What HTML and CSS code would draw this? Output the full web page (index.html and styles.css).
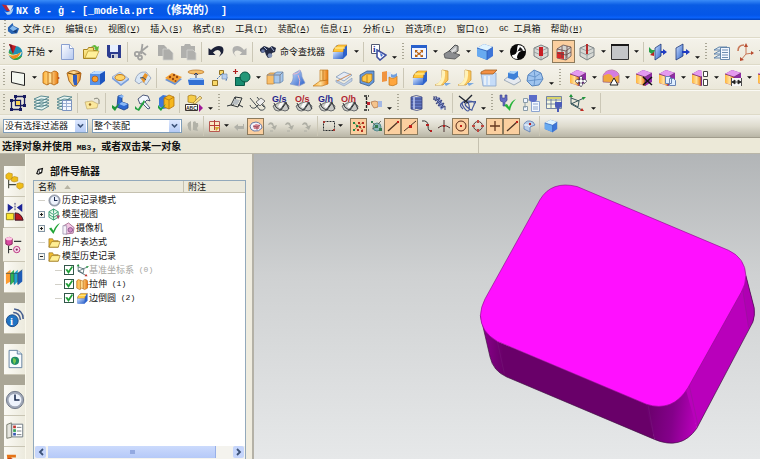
FILE: index.html
```html
<!DOCTYPE html>
<html lang="zh-CN">
<head>
<meta charset="utf-8">
<title>NX 8</title>
<link rel="stylesheet" href="styles.css">
</head>
<body>
<svg class="sprite" width="0" height="0" aria-hidden="true">
<defs>
<linearGradient id="gB" x2="1" y2="1"><stop offset="0" stop-color="#cfe2ff"/><stop offset="1" stop-color="#2a5fc8"/></linearGradient>
<linearGradient id="gO" x2="1" y2="0"><stop offset="0" stop-color="#ffb43c"/><stop offset=".5" stop-color="#ffe09a"/><stop offset="1" stop-color="#e8780c"/></linearGradient>
<linearGradient id="gY" x2="1" y2="1"><stop offset="0" stop-color="#fff6a8"/><stop offset="1" stop-color="#e8b020"/></linearGradient>
<linearGradient id="gP" x2="1" y2="1"><stop offset="0" stop-color="#fff"/><stop offset="1" stop-color="#b4c8f0"/></linearGradient>
<symbol id="start" viewBox="0 0 18 18"><circle cx="9.500" cy="10" r="7" fill="#1f8fb4"/><path d="M3 7q6 8 13 6q-2 4-7 4q-6-1-6-10z" fill="#38a838"/><path d="M1 8q4 7 15 1q-2 6-8 6q-6-1-7-7z" fill="#f4f4d0"/><path d="M2 11q5 4 13-2q-3 7-8 7z" fill="#f08a1c"/><path d="M3 1l7 2-3 8z" fill="#c41c24"/><path d="M3 1l3 1 1 9z" fill="#7c1420"/></symbol>
<symbol id="new" viewBox="0 0 18 18"><path d="M2.500 1.500h8l4 4v11h-12z" fill="url(#gP)" stroke="#8aa0d0"/><path d="M10.500 1.500v4h4" fill="#fff" stroke="#8aa0d0"/></symbol>
<symbol id="open" viewBox="0 0 18 18"><path d="M1.500 15.500v-9h4l1-2h5v3h4l-2 8z" fill="url(#gY)" stroke="#a88420"/><path d="M3 15l3-7h11l-3 7z" fill="#fff09a" stroke="#b89830" stroke-width=".7"/><path d="M9 4q4-4 6 0l2-1-1 5-4-2 1-1q-1-2-4-1z" fill="#60b838"/></symbol>
<symbol id="save" viewBox="0 0 18 18"><path d="M2 2h14v13H4l-2-2z" fill="#2c3c90"/><path d="M5 2h8v7H5z" fill="#e8f0ff"/><path d="M6 11h7v4H6z" fill="#c8ccd8"/><path d="M7 12h2v3H7z" fill="#223070"/></symbol>
<symbol id="cut" viewBox="0 0 18 18"><g fill="none" stroke="#a2a2a0" stroke-width="1.800"><path d="M9.500 1L8 11M15 3L6 10M9 9l4 3"/><circle cx="4" cy="11" r="2.200"/><circle cx="7" cy="14.500" r="2"/></g></symbol>
<symbol id="copy" viewBox="0 0 18 18" fill="#adadaa"><path d="M2 2h6l3 3v8H2z"/><path d="M7 6h6l4 4v7H7z" stroke="#d4d4d0" stroke-width=".8"/></symbol>
<symbol id="paste" viewBox="0 0 18 18" fill="#b0b0ad"><path d="M2 3h3l1-2h5l1 2h4v12H2z"/><path d="M8 7h6l3 3v7H8z" stroke="#d4d4d0" stroke-width=".8"/></symbol>
<symbol id="undo" viewBox="0 0 18 18"><path d="M1.500 5v7h7l-2.500-2.500q6-5 8 .5l-2 4 4-4q2-7-4-7-4 0-8 4z" fill="#1c2138"/></symbol>
<symbol id="redo" viewBox="0 0 18 18"><path d="M16.500 5v7h-7l2.500-2.500q-6-4-8 .5l2 4-3-4q-2-7 4-7 4 0 7 4z" fill="#b0b0ae"/></symbol>
<symbol id="binoc" viewBox="0 0 18 18"><path d="M1 6l4-3 3 1 2 1 3-2 4 2-1 4-3 1-1 4-3 1-2-3-1-3-3 1-2-2z" fill="#222a44"/><circle cx="11" cy="12.500" r="2.300" fill="#8494b8"/><path d="M5 4l3 3M12 4l3 4" stroke="#a8b4d8"/><circle cx="4" cy="8" r="1.800" fill="#6c7ca8"/></symbol>
<symbol id="blend" viewBox="0 0 18 18"><path d="M2 7l4-5h10v10l-4 4H2z" fill="#2c62cc"/><path d="M2 9q0-4 5-7h9q-4 2-4 7z" fill="#ffc83c" stroke="#d08818" stroke-width=".6"/><path d="M2 9h10v7H2z" fill="url(#gB)"/><path d="M4 5h10" stroke="#fff5b0"/></symbol>
<symbol id="info" viewBox="0 0 18 18"><path d="M2.500 1.500h8v9h-8z" fill="#fff" stroke="#525a74"/><text x="4" y="9" font-size="9" font-weight="700" font-family="Liberation Serif, serif" fill="#1c2c90">i</text><path d="M8 7l9 5-6 5-3-3z" fill="#fff" stroke="#4050a0" stroke-width="1.600"/><path d="M11 10l3 2-2 2z" fill="#3e6ad0"/></symbol>
<symbol id="fit" viewBox="0 0 18 18"><path d="M1.500 2.500h15v13h-15z" fill="#f2f5ff" stroke="#2c58b4"/><path d="M1 2h16v3H1z" fill="#2860cc"/><path d="M5 7h3L6.700 8.200 9 10l2.300-1.800L10 7h3v3l-1.200-1L10 11l2 1.500 1-1V14h-3l1-1-2-1.600-2 1.600 1 1H5v-3l1 1.200L8 11 6.200 9 5 10z" fill="#b86010"/></symbol>
<symbol id="laptop" viewBox="0 0 18 18"><path d="M5 9l7-7 3 1v5l-6 4z" fill="#b4b6b6" stroke="#4c4e50"/><path d="M1 11l5-3 11 4-5 4-10-1z" fill="#8b8d90" stroke="#4c4e50" stroke-width=".8"/><path d="M8 8l5-4v3l-4 3z" fill="#ddd"/></symbol>
<symbol id="cube" viewBox="0 0 18 18"><path d="M1 5l7-4 9 3v9l-6 4-10-4z" fill="#3d75d8"/><path d="M1 5l7-4 9 3-6 4z" fill="#e0f4ff"/><path d="M1 5l10 3v9L1 13z" fill="#68aaf0"/><path d="M1 5l10 3 6-4M11 8v9" stroke="#2858b0" stroke-width=".7" fill="none"/></symbol>
<symbol id="zebra" viewBox="0 0 18 18"><circle cx="9" cy="9" r="8" fill="#080808"/><path d="M9 2q6 0 7 6q-5-1-7 3q-2 4 0 5q-6 0-6-4q5 0 5-5q0-3 1-5z" fill="#fff"/><path d="M11 4q3 2 3 4-4-1-6 1 2-3 3-5z" fill="#111"/></symbol>
<symbol id="sec1" viewBox="0 0 18 18"><path d="M2 5l7-3 7 3v8l-7 4-7-4z" fill="#d6d8d4" stroke="#7c8284"/><path d="M2 5l7 3 7-3M9 8v9M2 9l7 3 7-3" fill="none" stroke="#8c9496" stroke-width=".8"/><path d="M7 4h4v9H7z" fill="#c81e24"/></symbol>
<symbol id="sec2" viewBox="0 0 18 18"><path d="M2 6l6-4 8 2v9l-5 4-9-2z" fill="#d4d4d0" stroke="#625050" stroke-width=".8"/><path d="M2 9h7v7l-7-1z" fill="#d8282a"/><path d="M2 6l9 2 5-4M11 8v9M7 3v12M12 3v12M2 10l9 2 5-3" stroke="#624444" stroke-width=".8" fill="none"/></symbol>
<symbol id="sec3" viewBox="0 0 18 18"><path d="M2 5l7-3 7 3v8l-7 4-7-4z" fill="#d6d8d4" stroke="#7c8284"/><path d="M2 5l7 3 7-3M2 9l7 3 7-3M9 8v9" fill="none" stroke="#8c9496" stroke-width=".8"/><path d="M8 1h2v10H8z" fill="#b42c2c"/></symbol>
<symbol id="square" viewBox="0 0 18 18"><path d="M.500 1.500h17v15H.500z" fill="#c4c6c8" stroke="#303030"/><path d="M0 1h18v2H0z" fill="#181818"/></symbol>
<symbol id="doorin" viewBox="0 0 18 18"><path d="M6 5l6-4v12l-6 4z" fill="url(#gB)" stroke="#203878" stroke-width=".8"/><path d="M12 8h2V6l4 3-4 3v-2h-2z" fill="#203cc0"/><path d="M0 4l3 3 3 0-2 5-4-3z" fill="#28a048"/><path d="M1 12l4-3v4z" fill="#c02020"/></symbol>
<symbol id="doorout" viewBox="0 0 18 18"><path d="M4 5l7-4v12l-7 4z" fill="url(#gB)" stroke="#203878" stroke-width=".8"/><path d="M10 8h4V6l4 3-4 3v-2h-4z" fill="#203cc0"/></symbol>
<symbol id="laylist" viewBox="0 0 18 18"><g fill="#dce8f0" stroke="#48709c" stroke-width=".8"><path d="M1 15l5-3h8l-4 3zM1 11l5-3h8l-4 3zM1 7l5-3h8l-4 3z"/><path d="M7.500 4.500h9v12h-9z" fill="#f3f7ff"/><path d="M9 7h6M9 9.500h6M9 12h6M9 14.500h6"/></g></symbol>
<symbol id="csysr" viewBox="0 0 18 18"><g fill="none" stroke="#c87858"><path d="M10 11V2M10 11l7-1M10 11l-5 6"/><path d="M2 8q0-6 6-6" stroke-width="1.600"/></g><path d="M8 4l2-4 2 4zM15 8l3 2-3 2zM4 14v4l4-1z" fill="#b84c30"/></symbol>
<symbol id="datum" viewBox="0 0 18 18"><path d="M2.500 2.500l13 2v12l-13-3z" fill="#f4f7f0" stroke="#222"/></symbol>
<symbol id="extrude" viewBox="0 0 18 18"><path d="M1 4q2-3 5-1l3 1 3-2q3 0 4 2v10l-4 2-4-2-3 2-4-2z" fill="url(#gO)" stroke="#b46208" stroke-width=".8"/><path d="M6 3v13M10 4v11" stroke="#b46208" stroke-width=".8"/><path d="M16 8l2 1-2 1z" fill="#b03010"/></symbol>
<symbol id="revolve" viewBox="0 0 18 18"><path d="M2 4q7-5 14 0l-1 7-4 6H8l-4-5z" fill="url(#gO)" stroke="#985008" stroke-width=".8"/><path d="M8 5l4 1v10H9l-1-4z" fill="#315ec0"/><path d="M3 4q6 3 12 0" fill="none" stroke="#684010"/></symbol>
<symbol id="hole" viewBox="0 0 18 18"><path d="M2 5l5-3h10v10l-5 4H2z" fill="#1c55c0"/><path d="M2 5l5-3h10l-5 3z" fill="#bedcff"/><path d="M2 5h10v11H2z" fill="#5894ea"/><circle cx="7" cy="10" r="3" fill="#ffa028" stroke="#984814" stroke-width=".6"/></symbol>
<symbol id="plate" viewBox="0 0 18 18"><path d="M1 8l8-5 9 7-8 6z" fill="#c4d8f4" stroke="#8ca4cc" stroke-width=".7"/><path d="M1 8v2l9 7 8-6v-2l-8 6z" fill="#7ca0dc"/><ellipse cx="9" cy="8.500" rx="5" ry="3" fill="#ffd468" stroke="#c47814"/></symbol>
<symbol id="rib" viewBox="0 0 18 18"><path d="M1 12Q3 2 12 3l5 6-5 7q-3-6-7-1z" fill="#d8e6f5" stroke="#8c9cb8" stroke-width=".8"/><path d="M7 10l4-6 3 2-4 8z" fill="#e8952c"/><path d="M6 9q3-2 6 2" fill="none" stroke="#38506c"/></symbol>
<symbol id="pattern" viewBox="0 0 18 18"><path d="M1 11l7-5 10 4-7 6z" fill="#6c94d4"/><path d="M1 9l7-5 10 4-7 6z" fill="#f4a034"/><g fill="#984810"><circle cx="6" cy="8" r="1.200"/><circle cx="10" cy="6" r="1.200"/><circle cx="9" cy="10" r="1.200"/><circle cx="13" cy="8" r="1.200"/><circle cx="11.500" cy="12" r="1"/></g></symbol>
<symbol id="offset" viewBox="0 0 18 18"><ellipse cx="9" cy="3" rx="8" ry="2" fill="#f5bf68" stroke="#b46c1c" stroke-width=".7"/><path d="M9 4v8M7 6l2-2 2 2" stroke="#30406c" fill="none"/><path d="M1 11l3-2h11l2 2v5H2z" fill="#3270d4"/><path d="M1 11l3-2h11l2 2z" fill="#a0c8fc"/></symbol>
<symbol id="move" viewBox="0 0 18 18"><g fill="#f8d868" stroke="#947424"><path d="M2.500 11.500h5v5h-5zM9.500 1.500h4v4h-4z"/></g><path d="M7 10l6-6M13 7l4 1-1 4" fill="none" stroke="#3d70b8" stroke-dasharray="2 1"/><path d="M12 5h5v5h-5z" fill="#b8d0f0" stroke="#6484b0" stroke-width=".6"/></symbol>
<symbol id="unite" viewBox="0 0 18 18"><path d="M2 8h9v9H2z" fill="#188c70"/><circle cx="12" cy="8" r="5" fill="#249878" stroke="#0b5846"/><path d="M2.500 8.500h5M2.500 8.500v8h9v-4" stroke="#0b5846" fill="none"/><path d="M2.500 0v5M0 2.500h5" stroke="#b02020" stroke-width="1.200"/></symbol>
<symbol id="boxpair" viewBox="0 0 18 18"><path d="M1 6l3-2h6v9l-3 2H1z" fill="#fbc06a" stroke="#b87c30" stroke-width=".7"/><path d="M8 5l3-2h6v9l-3 2H8z" fill="#a8c8ec" stroke="#5880b0" stroke-width=".7"/><path d="M1 6h13l3-3M14 6v8" fill="none" stroke="#7c8494"/></symbol>
<symbol id="sheet" viewBox="0 0 18 18"><path d="M1 15q4-3 3-10l7-4q2 3 2 7l3 6-6 3z" fill="url(#gB)" stroke="#8098cc" stroke-width=".7"/><path d="M4 5q6 0 7-4M10 17q2-6-1-11" fill="none" stroke="#ecb4c8"/></symbol>
<symbol id="trim" viewBox="0 0 18 18"><path d="M8 1h8v14l-6 2H1l7-5z" fill="url(#gO)" stroke="#c47c20" stroke-width=".7"/><path d="M8 12l8-1M11 1v10" stroke="#c47c20"/></symbol>
<symbol id="split" viewBox="0 0 18 18"><path d="M1 8l8-5 8 3-8 6z" fill="#e4eaf5" stroke="#8098b8" stroke-width=".8"/><path d="M1 11l8 4 8-6v3l-8 5-8-4z" fill="#c4d2e8" stroke="#8098b8" stroke-width=".6"/><path d="M2 12L16 5" stroke="#d08c54"/></symbol>
<symbol id="shell" viewBox="0 0 18 18"><path d="M2 6l7-4h7v11l-5 4-9-3z" fill="#6799dc" stroke="#2c5080" stroke-width=".7"/><path d="M8 5h6v6l-3 3-7-2V8z" fill="#ffc848" stroke="#a46c10" stroke-width=".7"/><path d="M9 6v8" stroke="#a46c10" stroke-width=".7"/></symbol>
<symbol id="thick" viewBox="0 0 18 18"><path d="M1 3l5-1v10l-5 1z" fill="#f09440"/><path d="M6 3h4v7H6z" fill="#d8e4f4"/><path d="M8 8q4 3 8-1v8q-4 3-8 1z" fill="#ffa63c" stroke="#c07418" stroke-width=".7"/><path d="M10 5q3 2 6-1v3q-3 3-6 1z" fill="#70a0e0"/></symbol>
<symbol id="draft" viewBox="0 0 18 18"><path d="M8 1l6 1v9l-5 5H1q7-2 7-9z" fill="#f9c65c" stroke="#c6902c" stroke-width=".7"/><path d="M8 1l3 1q1 9-4 14H1q8-3 7-15z" fill="#fff2b8"/><path d="M10 14h7l-5 3z" fill="#78a8e0"/></symbol>
<symbol id="extend" viewBox="0 0 18 18"><path d="M1 4h15v13H3z" fill="#c5dcf8" stroke="#8ca4c8" stroke-width=".8"/><path d="M1 3l4-2h12l-4 4H1z" fill="#f49044" stroke="#a46020" stroke-width=".8"/><path d="M5 7v9M9 7v9" stroke="#e8f0f8" stroke-width="2"/></symbol>
<symbol id="boss" viewBox="0 0 18 18"><path d="M1 11l5-4h9l3 5-7 4z" fill="#e6eaf0" stroke="#8c9aac" stroke-width=".8"/><path d="M5 4l3-2h7v6l-4 3-6-2z" fill="#3d80d8"/><path d="M5 4l3-2h7l-4 3z" fill="#add4f8"/></symbol>
<symbol id="globe" viewBox="0 0 18 18"><path d="M2 6l6-5 7 3 2 6-4 6-7 1-5-5z" fill="#9fc4ee" stroke="#3d70b0" stroke-width=".8"/><path d="M2 6l7 2 6-4M9 8l-1 9M1 12l8-1 8-1M8 1l1 7" stroke="#5c8cc4" stroke-width=".8" fill="none"/></symbol>
<symbol id="pc" viewBox="0 0 18 18"><path d="M1 5l7-4 9 3v9l-7 4-9-3z" fill="#8e2ca4"/><path d="M1 5l7-4 9 3-7 4z" fill="#e49af0"/><path d="M1 5l9 3v9l-9-3z" fill="url(#gO)"/><path d="M1 5l9 3 7-4M10 8v9" fill="none" stroke="#6d286c" stroke-width=".7"/></symbol>
<symbol id="pcmove" viewBox="0 0 18 18"><use href="#pc"/><path d="M12 7l2 2h-1v2h2v-1l3 2-3 3v-2h-2v2h1l-2 3-2-3h1v-2H9v2l-3-3 3-2v1h2V9h-1z" fill="#fff" stroke="#334" stroke-width=".6"/></symbol>
<symbol id="pcblend" viewBox="0 0 18 18"><path d="M1 13V7q2-6 9-6 6 1 7 5v8z" fill="#f0a83c" stroke="#985c88" stroke-width=".7"/><path d="M1 7q2-6 9-6 6 1 7 5l-6 3q-1-4-5-4-4 1-5 2z" fill="#d47ce0"/><path d="M8 16l4-7 4 7z" fill="#fff" stroke="#222"/></symbol>
<symbol id="pcdel" viewBox="0 0 18 18"><use href="#pc"/><path d="M8 8l9 8M17 8l-9 8" stroke="#111" stroke-width="1.500"/></symbol>
<symbol id="pccopy" viewBox="0 0 18 18"><use href="#pc"/><path d="M7.500 7.500h4l2 2v5h-6zM11.500 9.500h4l2 2v5h-6z" fill="#dfeeff" stroke="#6884b4"/></symbol>
<symbol id="pcalign" viewBox="0 0 18 18"><use href="#pc"/><path d="M11 1h7v17h-7z" fill="#f0eee2"/><path d="M12.500 2.500h4v5h-4zM12.500 10.500h4v6h-4z" fill="#fff" stroke="#444"/></symbol>
<symbol id="pcdim" viewBox="0 0 18 18"><use href="#pc"/><path d="M7 9h11v8H7z" fill="#f7f7f7"/><path d="M7.500 9v8M17.500 9v8M8 13h9M8 13l3-2v4zM17 13l-3-2v4z" stroke="#222" stroke-width=".8" fill="#222"/></symbol>
<symbol id="group" viewBox="0 0 18 18"><path d="M6.500 2.500h9v9h-9zM2.500 6.500h9v9h-9z" fill="none" stroke="#181c60" stroke-width="1.300"/><path d="M7 7h4v4H7z" fill="#f5d058"/><g fill="#181c60"><path d="M5 1h3v3H5zM14 1h3v3h-3zM14 10h3v3h-3zM1 5h3v3H1zM1 14h3v3H1zM10 14h3v3h-3z"/></g></symbol>
<symbol id="layers" viewBox="0 0 18 18"><g stroke="#4c8088" stroke-width=".9" fill="#e8f4f0"><path d="M4 15l-2-1 7-3 8 1-7 4zM4 12l-2-1 7-3 8 1-7 4zM4 9L2 8l7-3 8 1-7 4zM4 6L2 5l7-3 8 1-7 4z"/></g></symbol>
<symbol id="layset" viewBox="0 0 18 18"><use href="#layers"/><path d="M7.500 6.500h9v10h-9z" fill="#f5f8ff" stroke="#7c94c0"/><path d="M8 9.500h8M8 12.500h8M11.500 7v9" stroke="#9cb0d4"/></symbol>
<symbol id="note" viewBox="0 0 18 18"><path d="M2 8l7-1 6 3-1 4-10 1z" fill="#fbe89c" stroke="#b89f60" stroke-width=".6"/><circle cx="7" cy="10.500" r="1.200" fill="#986c20"/><path d="M11 5q4-2 5 1v4" fill="none" stroke="#848478"/></symbol>
<symbol id="wave" viewBox="0 0 18 18"><path d="M7 2l4-1v7l6 2v4l-4 2-7-3z" fill="#2c68d0" stroke="#173c84" stroke-width=".8"/><path d="M7 2l4-1 2 1-2 2zM11 8l6 2-4 2-5-2z" fill="#88b8f8"/><path d="M1 11l3 2 5-4-5 8-3-3z" fill="#1f9638"/></symbol>
<symbol id="hammer" viewBox="0 0 18 18"><path d="M4 5l5-4 5 1 2 5-3-1-2 2 5 6-2 1-6-6-2 1z" fill="#f4f8ff" stroke="#26345c" stroke-width=".8"/><path d="M1 12l3 3 6-9 1 2-6 9-4-2z" fill="#24a040"/></symbol>
<symbol id="bluebox" viewBox="0 0 18 18"><path d="M2 4l4-3 5 1v12l-5 1-4-3z" fill="#3c78dc"/><path d="M7 4l5-3 5 2v9l-5 3-5-2z" fill="#f6b71c" stroke="#b47410" stroke-width=".8"/><path d="M7 4l5 2 5-3M12 6v9" stroke="#b47410" stroke-width=".8" fill="none"/><path d="M1 11l3 3 5-4-5 7-3-3z" fill="#20a040"/></symbol>
<symbol id="abc" viewBox="0 0 18 18"><path d="M3 2l3-1 5 1v6l-3 1-5-1z" fill="#f5cc48" stroke="#a07414" stroke-width=".7"/><path d="M8 9l7-7 2 2-7 6z" fill="#f8df84" stroke="#906c28" stroke-width=".6"/><path d="M.500 10.500h12v6H.500z" fill="#fff" stroke="#3a3430"/><text x="1" y="15.500" font-size="5" font-weight="700" font-family="Liberation Sans, sans-serif" fill="#2a2424">ABC</text><path d="M14 10l4 4-4 4z" fill="#a01898"/></symbol>
<symbol id="curve" viewBox="0 0 18 18"><path d="M1 12l4-1 4-8 7 1-3 7 4 2M5 11l7 2 1-3M9 3l1 4-4 5" fill="none" stroke="#2a3034"/><path d="M9 5l5 1-3 5-5-1z" fill="#b6bcc0"/></symbol>
<symbol id="spool" viewBox="0 0 18 18"><path d="M1 11q1 4 5 3l8-7M1 4l10 12q5 1 5-3L8 3M6 14l5-5 4 4" fill="none" stroke="#454d52"/><path d="M7 8l5-4 4 3-5 5z" fill="#ececec" stroke="#555" stroke-width=".8"/></symbol>
<symbol id="surf" viewBox="0 0 18 18"><path d="M1 12l5-3 6-1 5 4-1 4q-3 2-6 0-4 2-7 0z" fill="#c9cac6" stroke="#4c5054" stroke-width=".8"/><path d="M2 9q1 5 6 7l6-8q2 6 3 7M9 16l5-7" fill="none" stroke="#34383c"/><path d="M8 9l4-1-3 6-3-1z" fill="#fafaf8"/></symbol>
<symbol id="gs" viewBox="0 0 18 18"><use href="#surf"/><text class="tag navy" x="0" y="8">G/s</text></symbol>
<symbol id="os" viewBox="0 0 18 18"><use href="#surf"/><text class="tag red" x="0" y="8">O/s</text></symbol>
<symbol id="gh" viewBox="0 0 18 18"><use href="#surf"/><text class="tag navy" x="0" y="8">G/h</text></symbol>
<symbol id="oh" viewBox="0 0 18 18"><use href="#surf"/><text class="tag red" x="0" y="8">O/h</text></symbol>
<symbol id="hand" viewBox="0 0 18 18"><path d="M0 2h5M0 16h5M2.500 3v12" stroke="#222" stroke-width="1.400" stroke-dasharray="3 1"/><path d="M3 8h3v3H3z" fill="#c02430"/><path d="M7 8l4-1 3 1v5l-4 1-2-3z" fill="#f5c48c" stroke="#a86c40" stroke-width=".7"/><path d="M14 7h4v6h-4z" fill="#a4b8e4"/></symbol>
<symbol id="spring1" viewBox="0 0 18 18"><path d="M4 3h11v12H4z" fill="#657ac4"/><path d="M4 3q5-3 11 0v12q-5 3-11 0zM4 5h11M4 8h11M4 11h11M4 14h11" fill="none" stroke="#36407c" stroke-width=".8"/><path d="M7 3v12" stroke="#c2ccf0" stroke-width="1.500"/></symbol>
<symbol id="spring2" viewBox="0 0 18 18"><path d="M5 4l4-1 6 10-4 3z" fill="#8c9cd4"/><path d="M4 2v4q0-4 3-3l-2 4 5-3-4 6 6-4-4 6 6-3-3 5 4-2v4" fill="none" stroke="#38427c"/></symbol>
<symbol id="spring3" viewBox="0 0 18 18"><path d="M5 15q-5-4 0-7t6 3-1 6-5-5 5-5 6 4-2 5-5-3 4-5 4 1" fill="none" stroke="#42569c" stroke-width="1.200"/><path d="M1 2l9 7M14 1l-8 8" stroke="#202630" stroke-width="1.400"/></symbol>
<symbol id="plugok" viewBox="0 0 18 18"><path d="M1 1v4q0 3 3 3v4h2V8q3-1 2-4V1H6v3H3V1z" fill="#646cc4" stroke="#39408c" stroke-width=".6"/><path d="M5 11l3-1 2 3q2-6 7-8-5 5-6 12z" fill="#25b438"/></symbol>
<symbol id="plugdoc" viewBox="0 0 18 18"><path d="M1.500 4.500h4v4h-4zM1.500 12.500h4v4h-4zM5 6h4M3 9v5" fill="#eef4ff" stroke="#8a9ca8"/><path d="M9.500 7.500h8v10h-8zM11 10h5M11 13h5M11 15h5" fill="#f4f8ff" stroke="#8ca4d0"/><path d="M7 1v4q0 3 4 3t4-3V1z" fill="#5b6cc8"/></symbol>
<symbol id="plugtab" viewBox="0 0 18 18"><path d="M1.500 2.500h15v12h-15zM1 6h15M1 10h15M6 3v11M11 3v11" fill="#f5f8e0" stroke="#566a94" stroke-width=".8"/><path d="M2 3h14v2H2z" fill="#d8d46c"/><path d="M10 8v4q0 2 2 2v4h2v-4q3 0 3-3V8z" fill="#4c5cb8"/></symbol>
<symbol id="csys" viewBox="0 0 18 18"><path d="M3 1v9l11 6M3 10l13-6M3 4l8 3-1 6-7-4" fill="none" stroke="#37565c"/><path d="M1 3l2-3 2 3zM14 3l4 0-3 3z" fill="#20963c"/><path d="M12 17l4 0-2-3z" fill="#c02c24"/></symbol>
<symbol id="gears" viewBox="0 0 14 14"><path d="M2 8q-2-4 3-6v10q-3-1-3-4zM7 3q3-2 3 1h2q1 3-1 5l1 3-5-1z" fill="#b2b2a8"/></symbol>
<symbol id="snapbox" viewBox="0 0 14 14"><path d="M1.500 2.500h10v10h-10z" fill="#f9e9c4" stroke="#b85850"/><path d="M6.500 1v10M2 6.500h10" stroke="#b83c34"/><path d="M7 8h5l-4 4z" fill="#d4a830"/></symbol>
<symbol id="back" viewBox="0 0 14 14"><path d="M2 8l4-3v2h5V5h1v5H6v2z" fill="#b0b0a8"/></symbol>
<symbol id="solid" viewBox="0 0 14 14"><path d="M1 7q1-4 6-4 6 1 6 6-3 4-8 3-4-1-4-5z" fill="#f2f4fc" stroke="#6878a0"/><path d="M4 7l3-2 4 1-1 4-5 0z" fill="#d8808c"/><path d="M4 7l4 1 3-2M8 8v3" fill="none" stroke="#7c3c50" stroke-width=".7"/></symbol>
<symbol id="arc" viewBox="0 0 14 14"><path d="M2 6q1-4 5-2l1 3 3-1-2 5-4-3h2q-1-4-4-2z" fill="#aeaea4"/><path d="M4 12h3" stroke="#aeaea4"/></symbol>
<symbol id="marquee" viewBox="0 0 14 14"><path d="M1.500 2.500h11v9h-11z" fill="none" stroke="#24292c" stroke-dasharray="2 1"/><path d="M1 2h2v2H1zM11 10h2v2h-2z" fill="#a43c34"/></symbol>
<symbol id="pts" viewBox="0 0 14 14"><path d="M2 4l9 7M11 3l-9 8" stroke="#927840" stroke-width=".8"/><g fill="#208848"><path d="M1 3h2v2H1zM1 10h2v2H1zM4 6h2v2H4z"/></g><g fill="#b83020"><path d="M6 3h2v2H6zM10 3h2v2h-2zM7 7h2v2H7zM11 7h2v2h-2zM9 11h2v2H9zM5 10h2v2H5z"/></g></symbol>
<symbol id="pts2" viewBox="0 0 14 14"><circle cx="8" cy="8" r="4" fill="#8cb4b8" stroke="#588c90"/><path d="M2 2l4 4M9 5l3-3M3 10l4-2" stroke="#5e5a50" stroke-width=".8"/><path d="M2 2h2v2H2zM10 9h3v3h-3zM6 6h3v3H6z" fill="#347c50"/></symbol>
<symbol id="endpt" viewBox="0 0 14 14"><path d="M2 12l10-9" stroke="#4e3525" stroke-width="1.300"/><path d="M11 2h2v2h-2z" fill="#c01c18"/></symbol>
<symbol id="midpt" viewBox="0 0 14 14"><path d="M1 12l12-10" stroke="#4e3525"/><path d="M6 6h3v3H6z" fill="#c01c18"/></symbol>
<symbol id="ctrl" viewBox="0 0 14 14"><path d="M2 2q6-1 6 5t4 5" fill="none" stroke="#333"/><path d="M6 5h3v2H6zM10 11h2v2h-2z" fill="#b42020"/></symbol>
<symbol id="inter" viewBox="0 0 14 14"><path d="M7 1v12M1 9q6-5 12 0" fill="none" stroke="#4a3030"/><path d="M6 6h2v2H6z" fill="#b42020"/></symbol>
<symbol id="center" viewBox="0 0 14 14"><circle cx="7" cy="7" r="5" fill="none" stroke="#5a2a18"/><path d="M6 6h2v2H6z" fill="#c02018"/></symbol>
<symbol id="quad" viewBox="0 0 14 14"><circle cx="7" cy="7" r="4.500" fill="none" stroke="#5a3a38"/><path d="M6 1h2v3H6zM6 10h2v3H6zM1 6h3v2H1zM10 6h3v2h-3z" fill="#c04840"/></symbol>
<symbol id="plus" viewBox="0 0 14 14"><path d="M7 2v10M2 7h10" stroke="#663820" stroke-width="1.300"/></symbol>
<symbol id="onface" viewBox="0 0 14 14"><path d="M2 5q3-5 9-2l2 3-5 2v5l-6-3z" fill="#b7cde8" stroke="#5b7bb4" stroke-width=".8"/><path d="M2 6q4-1 6 2" fill="none" stroke="#fff"/><path d="M7 4h2v2H7z" fill="#b82020"/></symbol>
<symbol id="asm" viewBox="0 0 22 22"><path d="M4 10v9M4 15h8" stroke="#44483c" stroke-width="1.200"/><g fill="#f0be18" stroke="#b88c1c" stroke-width=".7"><path d="M1 4l3-2 4 1v5L5 10 1 8zM7 8l3-2 4 1v4l-4 1-3-1zM13 14l3-1 4 1v4l-4 2-3-2z"/></g></symbol>
<symbol id="constraint" viewBox="0 0 22 22"><path d="M3 2l6 4-6 5zM19 2l-6 4 6 5z" fill="#1c2498"/><path d="M11 1v9" stroke="#26276c" stroke-dasharray="2 1"/><path d="M1.500 12.500h8v7h-8z" fill="#fbe630" stroke="#8a791c"/><path d="M11 12q7 0 9 8h-9z" fill="#b81820" stroke="#301020"/></symbol>
<symbol id="part" viewBox="0 0 22 22"><path d="M2 4q4-3 7 0v6q-4 3-7 0z" fill="#d848a0" stroke="#842058"/><ellipse cx="5.500" cy="4" rx="3.500" ry="1.700" fill="#ffc4e4"/><path d="M11 7h8M5 12v8M5 16h4" stroke="#36383a" stroke-width="1.200"/><circle cx="14" cy="16" r="3.500" fill="#f6dcec" stroke="#b82878"/><circle cx="14" cy="16" r="1.200" fill="#842058"/></symbol>
<symbol id="books" viewBox="0 0 22 22"><path d="M1 7l5-4v13l-5 3z" fill="#ff9c30"/><path d="M6 7l4-4v13l-4 4z" fill="#32b454"/><path d="M10 7l4-4v13l-4 4z" fill="#22a4d0"/><path d="M14 7l5-4v13l-5 4z" fill="#1e5cb8"/><path d="M1 7h13l5-4M6 7v12M10 7v12M14 7v12" fill="none" stroke="#1c4850" stroke-width=".7"/></symbol>
<symbol id="web" viewBox="0 0 22 22"><circle cx="8" cy="14" r="6.500" fill="#2074c4" stroke="#1a4884"/><text x="5.500" y="18.500" font-size="12" font-weight="700" font-family="Liberation Serif, serif" fill="#fff">i</text><path d="M9 5q7 0 8 8M10 1q10 1 10 11" fill="none" stroke="#486090" stroke-width="1.700"/></symbol>
<symbol id="doc" viewBox="0 0 22 22"><path d="M4.500 1.500h9l5 4v15h-14z" fill="#f8fbff" stroke="#5c7c9c"/><path d="M13.500 1.500v4h5" fill="#dae8f6" stroke="#5c7c9c"/><circle cx="11" cy="13" r="4.500" fill="#208c68"/><path d="M9 10q4 1 3 4l-2 3q-2-4-1-7z" fill="#78c850"/></symbol>
<symbol id="clock" viewBox="0 0 22 22"><circle cx="11" cy="11" r="9.500" fill="#a0a8b8" stroke="#6c7484"/><circle cx="11" cy="11" r="7" fill="#eef3fc"/><path d="M11 5v6h5" fill="none" stroke="#18284c" stroke-width="1.700"/></symbol>
<symbol id="roles" viewBox="0 0 22 22"><path d="M2 4l5-2v16l-5 1z" fill="#e6e6df" stroke="#737668"/><path d="M7.500 3.500h12v14h-12z" fill="#fff" stroke="#66727b"/><path d="M9 5h3v3H9z" fill="#c03830"/><path d="M9 9h3v3H9z" fill="#30a050"/><path d="M9 13h3v3H9z" fill="#3858b0"/><path d="M13 7h5M13 11h5M13 15h5" stroke="#71767c"/></symbol>
<symbol id="flag" viewBox="0 0 22 22"><path d="M2 3h10v3H7v5H3z" fill="#e47418"/><path d="M3 7h5v3H3z" fill="#b82818"/></symbol>
<symbol id="views" viewBox="0 0 14 14"><path d="M1 4l5-3 5 3v6l-5 3-5-3zM1 4l5 3 5-3M6 7v6M1 7l5 3 5-3M6 1v5" fill="#d8f4dc" stroke="#249464" stroke-width=".9"/><path d="M9 8h4l-2 4z" fill="#a84c6c"/></symbol>
<symbol id="camera" viewBox="0 0 14 14"><path d="M2 4l5-3 6 5-1 6-8 1z" fill="#f4c8e4" stroke="#94547c" stroke-width=".8"/><circle cx="9" cy="8.500" r="2.500" fill="#d48cc4" stroke="#744c80" stroke-width=".8"/><path d="M1 4h4v9H1z" fill="#f6f0f8" stroke="#8c84a0" stroke-width=".7"/></symbol>
<symbol id="folder" viewBox="0 0 14 14"><path d="M1 12V3h4l1 2h5v7z" fill="#f0bb30" stroke="#94701c" stroke-width=".7"/><path d="M1 12l3-6h9l-2 6z" fill="#ffef94" stroke="#94701c" stroke-width=".7"/></symbol>
<symbol id="check" viewBox="0 0 12 12"><path d="M1 6l2-1 2 3q2-5 6-7-4 5-6 10z" fill="#22a538"/></symbol>
<symbol id="tri" viewBox="0 0 6 4"><path d="M0 0h6L3 3z" fill="#111"/></symbol>
<symbol id="chev" viewBox="0 0 8 6"><path d="M1 1l3 3 3-3" fill="none" stroke="#3c5278" stroke-width="1.800"/></symbol>
</defs>
</svg>

<header class="titlebar">
<svg class="i16" viewBox="0 0 18 18"><path d="M1 2l8 1 3 8-5-1z" fill="#b42838"/><path d="M4 10q4 5 12-4-1 10-8 9z" fill="#a9cdf0"/><path d="M7 3l9 0-4 8z" fill="#dfe5f0"/></svg>
<h1><span class="half">NX 8 - ġ - [_modela.prt </span>（修改的）<span class="half"> ]</span></h1>
</header>

<nav class="menubar" aria-label="菜单">
<i class="grip"></i>
<svg class="i14" viewBox="0 0 14 14"><path d="M1 6l5-5 1 3 6 3-2 5-6 1-4-3z" fill="#2864b4"/><path d="M3 7l3-3 5 3-4 3z" fill="#83b8ec"/><path d="M6 10l5-2-1 4z" fill="#163c78"/></svg>
<button>文件<span class="half">(<u>F</u>)</span></button>
<button>编辑<span class="half">(<u>E</u>)</span></button>
<button>视图<span class="half">(<u>V</u>)</span></button>
<button>插入<span class="half">(<u>S</u>)</span></button>
<button>格式<span class="half">(<u>R</u>)</span></button>
<button>工具<span class="half">(<u>T</u>)</span></button>
<button>装配<span class="half">(<u>A</u>)</span></button>
<button>信息<span class="half">(<u>I</u>)</span></button>
<button>分析<span class="half">(<u>L</u>)</span></button>
<button>首选项<span class="half">(<u>P</u>)</span></button>
<button>窗口<span class="half">(<u>O</u>)</span></button>
<button><span class="half">GC </span>工具箱</button>
<button>帮助<span class="half">(<u>H</u>)</span></button>
</nav>

<div class="toolbar std" role="toolbar" aria-label="标准">
<i class="grip"></i>
<button class="label start"><svg><use href="#start"/></svg>开始<svg class="tri"><use href="#tri"/></svg></button>
<button aria-label="新建"><svg><use href="#new"/></svg></button>
<button aria-label="打开"><svg><use href="#open"/></svg></button>
<button aria-label="保存"><svg><use href="#save"/></svg></button>
<i class="sep"></i>
<button aria-label="剪切"><svg><use href="#cut"/></svg></button>
<button aria-label="复制"><svg><use href="#copy"/></svg></button>
<button aria-label="粘贴"><svg><use href="#paste"/></svg></button>
<i class="sep"></i>
<button aria-label="撤消"><svg><use href="#undo"/></svg></button>
<button aria-label="重做"><svg><use href="#redo"/></svg></button>
<i class="sep"></i>
<button class="label finder"><svg><use href="#binoc"/></svg>命令查找器</button>
<button aria-label="边倒圆"><svg><use href="#blend"/></svg></button>
<button class="drop" aria-label="更多"><svg><use href="#tri"/></svg></button>
<i class="sep"></i>
<button aria-label="信息"><svg><use href="#info"/></svg></button>
<button class="drop over" aria-label="选项"><svg><use href="#tri"/></svg></button>
<i class="grip"></i>
<button aria-label="适合窗口"><svg><use href="#fit"/></svg></button>
<button class="drop" aria-label="更多"><svg><use href="#tri"/></svg></button>
<button aria-label="透视"><svg><use href="#laptop"/></svg></button>
<button class="drop" aria-label="更多"><svg><use href="#tri"/></svg></button>
<button aria-label="着色"><svg><use href="#cube"/></svg></button>
<button class="drop" aria-label="更多"><svg><use href="#tri"/></svg></button>
<button aria-label="面分析"><svg><use href="#zebra"/></svg></button>
<button aria-label="截面"><svg><use href="#sec1"/></svg></button>
<button class="on" aria-label="剪切截面"><svg><use href="#sec2"/></svg></button>
<button aria-label="编辑截面"><svg><use href="#sec3"/></svg></button>
<button class="drop" aria-label="更多"><svg><use href="#tri"/></svg></button>
<button aria-label="背景"><svg><use href="#square"/></svg></button>
<button class="drop" aria-label="更多"><svg><use href="#tri"/></svg></button>
<i class="sep"></i>
<button aria-label="显示"><svg><use href="#doorin"/></svg></button>
<button aria-label="隐藏"><svg><use href="#doorout"/></svg></button>
<button class="drop over" aria-label="选项"><svg><use href="#tri"/></svg></button>
<i class="grip"></i>
<button aria-label="图层设置"><svg><use href="#laylist"/></svg></button>
<button aria-label="坐标系"><svg><use href="#csysr"/></svg></button>
<button class="drop" aria-label="更多"><svg><use href="#tri"/></svg></button>
</div>

<div class="toolbar feature" role="toolbar" aria-label="特征">
<i class="grip"></i>
<button aria-label="基准平面"><svg><use href="#datum"/></svg></button>
<button class="drop" aria-label="更多"><svg><use href="#tri"/></svg></button>
<button aria-label="拉伸"><svg><use href="#extrude"/></svg></button>
<button aria-label="回转"><svg><use href="#revolve"/></svg></button>
<button aria-label="孔"><svg><use href="#hole"/></svg></button>
<button aria-label="凸起"><svg><use href="#plate"/></svg></button>
<button aria-label="筋"><svg><use href="#rib"/></svg></button>
<i class="sep"></i>
<button aria-label="阵列"><svg><use href="#pattern"/></svg></button>
<button aria-label="偏置"><svg><use href="#offset"/></svg></button>
<button aria-label="移动"><svg><use href="#move"/></svg></button>
<button aria-label="求和"><svg><use href="#unite"/></svg></button>
<button class="drop" aria-label="更多"><svg><use href="#tri"/></svg></button>
<button aria-label="修剪体"><svg><use href="#boxpair"/></svg></button>
<button aria-label="片体"><svg><use href="#sheet"/></svg></button>
<button aria-label="修剪"><svg><use href="#trim"/></svg></button>
<button aria-label="拆分"><svg><use href="#split"/></svg></button>
<button aria-label="抽壳"><svg><use href="#shell"/></svg></button>
<button aria-label="加厚"><svg><use href="#thick"/></svg></button>
<i class="sep"></i>
<button aria-label="边倒圆"><svg><use href="#blend"/></svg></button>
<button aria-label="面倒圆"><svg><use href="#draft"/></svg></button>
<button aria-label="软倒圆"><svg><use href="#draft"/></svg></button>
<button aria-label="延伸"><svg><use href="#extend"/></svg></button>
<button aria-label="凸台"><svg><use href="#boss"/></svg></button>
<button aria-label="球"><svg><use href="#globe"/></svg></button>
<button class="drop over" aria-label="选项"><svg><use href="#tri"/></svg></button>
<i class="grip wide"></i>
<button aria-label="移动面"><svg><use href="#pcmove"/></svg></button>
<button class="drop" aria-label="更多"><svg><use href="#tri"/></svg></button>
<button aria-label="调整圆角"><svg><use href="#pcblend"/></svg></button>
<button class="drop" aria-label="更多"><svg><use href="#tri"/></svg></button>
<button aria-label="删除面"><svg><use href="#pcdel"/></svg></button>
<button aria-label="复制面"><svg><use href="#pccopy"/></svg></button>
<button class="drop" aria-label="更多"><svg><use href="#tri"/></svg></button>
<button aria-label="对齐"><svg><use href="#pcalign"/></svg></button>
<button class="drop" aria-label="更多"><svg><use href="#tri"/></svg></button>
<button aria-label="尺寸"><svg><use href="#pcdim"/></svg></button>
<button class="drop" aria-label="更多"><svg><use href="#tri"/></svg></button>
<button aria-label="优化"><svg><use href="#pc"/></svg></button>
</div>

<div class="toolbar utility" role="toolbar" aria-label="实用工具">
<i class="grip"></i>
<button aria-label="分组"><svg><use href="#group"/></svg></button>
<button aria-label="图层"><svg><use href="#layers"/></svg></button>
<button aria-label="视图图层"><svg><use href="#layset"/></svg></button>
<i class="sep"></i>
<button aria-label="注释"><svg><use href="#note"/></svg></button>
<i class="sep"></i>
<button aria-label="链接"><svg><use href="#wave"/></svg></button>
<button aria-label="建模"><svg><use href="#hammer"/></svg></button>
<button aria-label="组件"><svg><use href="#bluebox"/></svg></button>
<i class="sep"></i>
<button aria-label="属性"><svg><use href="#abc"/></svg></button>
<button class="drop over" aria-label="选项"><svg><use href="#tri"/></svg></button>
<i class="grip"></i>
<button aria-label="直纹"><svg><use href="#curve"/></svg></button>
<button aria-label="扫掠"><svg><use href="#spool"/></svg></button>
<button aria-label="G/s"><svg><use href="#gs"/></svg></button>
<button aria-label="O/s"><svg><use href="#os"/></svg></button>
<button aria-label="G/h"><svg><use href="#gh"/></svg></button>
<button aria-label="O/h"><svg><use href="#oh"/></svg></button>
<button aria-label="测量"><svg><use href="#hand"/></svg></button>
<button class="drop over" aria-label="选项"><svg><use href="#tri"/></svg></button>
<i class="grip wide"></i>
<button aria-label="圆柱压缩弹簧"><svg><use href="#spring1"/></svg></button>
<button aria-label="圆柱拉伸弹簧"><svg><use href="#spring2"/></svg></button>
<i class="sep"></i>
<button aria-label="删除弹簧"><svg><use href="#spring3"/></svg></button>
<button class="drop over" aria-label="选项"><svg><use href="#tri"/></svg></button>
<i class="grip"></i>
<button aria-label="检查"><svg><use href="#plugok"/></svg></button>
<button aria-label="属性工具"><svg><use href="#plugdoc"/></svg></button>
<button aria-label="零件表"><svg><use href="#plugtab"/></svg></button>
<button aria-label="坐标"><svg><use href="#csys"/></svg></button>
<button class="drop over" aria-label="选项"><svg><use href="#tri"/></svg></button>
<i class="sep"></i>
</div>

<div class="selectbar" role="toolbar" aria-label="选择">
<label class="combo filter"><select aria-label="过滤器"><option>没有选择过滤器</option></select><svg><use href="#chev"/></svg></label>
<label class="combo scope"><select aria-label="范围"><option>整个装配</option></select><svg><use href="#chev"/></svg></label>
<button aria-label="齿轮"><svg><use href="#gears"/></svg></button>
<i class="sep"></i>
<button aria-label="捕捉"><svg><use href="#snapbox"/></svg></button>
<button class="drop" aria-label="更多"><svg><use href="#tri"/></svg></button>
<button aria-label="返回"><svg><use href="#back"/></svg></button>
<button class="on" aria-label="实体"><svg><use href="#solid"/></svg></button>
<button aria-label="向上"><svg><use href="#arc"/></svg></button>
<button aria-label="相切"><svg><use href="#arc"/></svg></button>
<button aria-label="连接"><svg><use href="#arc"/></svg></button>
<i class="sep"></i>
<button aria-label="框选"><svg><use href="#marquee"/></svg></button>
<button class="drop" aria-label="更多"><svg><use href="#tri"/></svg></button>
<i class="gap"></i>
<button class="on" aria-label="启用捕捉"><svg><use href="#pts"/></svg></button>
<button aria-label="捕捉点"><svg><use href="#pts2"/></svg></button>
<button class="on" aria-label="端点"><svg><use href="#endpt"/></svg></button>
<button class="on" aria-label="中点"><svg><use href="#midpt"/></svg></button>
<button aria-label="控制点"><svg><use href="#ctrl"/></svg></button>
<button aria-label="交点"><svg><use href="#inter"/></svg></button>
<button class="on" aria-label="圆心"><svg><use href="#center"/></svg></button>
<button aria-label="象限点"><svg><use href="#quad"/></svg></button>
<button class="on" aria-label="现有点"><svg><use href="#plus"/></svg></button>
<button class="on" aria-label="曲线上的点"><svg><use href="#endpt"/></svg></button>
<button aria-label="面上的点"><svg><use href="#onface"/></svg></button>
<i class="sep"></i>
<button aria-label="体"><svg><use href="#cube"/></svg></button>
</div>

<div class="status"><p>选择对象并使用<span class="half"> MB3</span>，或者双击某一对象</p><p></p></div>

<main>
<nav class="resources" aria-label="资源条">
<button aria-label="装配导航器"><svg><use href="#asm"/></svg></button>
<button aria-label="约束导航器"><svg><use href="#constraint"/></svg></button>
<button class="current" aria-label="部件导航器"><svg><use href="#part"/></svg></button>
<button aria-label="重用库"><svg><use href="#books"/></svg></button>
<i></i>
<button aria-label="Web"><svg><use href="#web"/></svg></button>
<i></i>
<button aria-label="文档"><svg><use href="#doc"/></svg></button>
<i></i>
<button aria-label="历史记录"><svg><use href="#clock"/></svg></button>
<button aria-label="角色"><svg><use href="#roles"/></svg></button>
<button aria-label="系统"><svg><use href="#flag"/></svg></button>
</nav>

<section class="navigator">
<h2><svg viewBox="0 0 10 10"><path d="M1 8l2-5 5-1-1 5-4 2z" fill="#fff" stroke="#111" stroke-width="1.500"/><path d="M4 3v4h3" fill="none" stroke="#111"/></svg>部件导航器</h2>
<div class="tree">
<div class="cols"><span>名称<svg viewBox="0 0 8 5"><path d="M0 5l4-5 4 5z" fill="#b7b4a4"/></svg></span><span>附注</span></div>
<ul>
<li><i class="twig"></i><svg><use href="#clock"/></svg>历史记录模式</li>
<li><button class="twist" aria-label="展开"></button><svg><use href="#views"/></svg>模型视图</li>
<li><button class="twist" aria-label="展开"></button><svg><use href="#check"/></svg><svg><use href="#camera"/></svg>摄像机</li>
<li><i class="twig"></i><svg><use href="#folder"/></svg>用户表达式</li>
<li><button class="twist open" aria-label="折叠"></button><svg><use href="#folder"/></svg>模型历史记录</li>
<li class="branch">
<ul>
<li class="dim"><i class="twig"></i><label><input type="checkbox" checked><svg><use href="#csys"/></svg>基准坐标系<span class="half"> (0)</span></label></li>
<li><i class="twig"></i><label><input type="checkbox" checked><svg><use href="#extrude"/></svg>拉伸<span class="half"> (1)</span></label></li>
<li><i class="twig"></i><label><input type="checkbox" checked><svg><use href="#blend"/></svg>边倒圆<span class="half"> (2)</span></label></li>
</ul></li>
</ul>
<div class="scroll"><button aria-label="向左"><svg class="left"><use href="#chev"/></svg></button><i class="thumb"></i><button aria-label="向右"><svg class="right"><use href="#chev"/></svg></button></div>
</div>
</section>

<section class="viewport" aria-label="图形窗口">
<svg viewBox="-618 -21 1518 918">
<defs>
<linearGradient id="front" gradientUnits="userSpaceOnUse" x1="560" x2="715" y1="770" y2="790"><stop offset="0" stop-color="#6a006c"/><stop offset=".5" stop-color="#84008a"/><stop offset="1" stop-color="#bd00bf"/></linearGradient>
<linearGradient id="left" gradientUnits="userSpaceOnUse" x1="62" x2="130" y1="0" y2="0"><stop offset="0" stop-color="#8e0090"/><stop offset="1" stop-color="#690069"/></linearGradient>
</defs>
<path d="M61 465L90 590Q99 632 140 650L585 838 565 732 112 543Z" fill="url(#left)"/>
<path d="M555 728L585 838Q665 872 712 805L686 670Z" fill="url(#front)"/>
<path d="M680 690L712 805 881 485Q888 465 885 442L860 345 840 390Z" fill="#b900bb"/>
<path d="M850 385L868 505 881 485Q888 465 885 442L860 345Z" fill="#b000b3"/>
<path d="M61 465L90 590Q99 632 140 650L585 838Q665 872 712 805L881 485Q888 465 885 442L860 345" fill="none" stroke="#3c1040" stroke-width="2"/>
<path d="M112 543L133 640M565 732L585 838M690 678L716 795M850 385L868 500" fill="none" stroke="#7a2880" stroke-width="1"/>
<path d="M352 77L808 269Q858 292 860 345Q860 372 846 395L686 682Q640 758 560 732L112 543Q62 515 61 465Q62 440 75 415L240 117Q275 58 352 77Z" fill="#ff10ff" stroke="#8c108c" stroke-width="2"/>
</svg>
</section>
</main>
</body>
</html>
```
FILE: styles.css
```css
* { box-sizing: border-box; }
html, body { height: 100%; }
body {
  margin: 0;
  display: flex;
  flex-direction: column;
  overflow: hidden;
  background: #ece9d8;
  color: #111;
  font: 9px/12px "Noto Sans CJK SC", sans-serif;
}
h1, h2, p, ul { margin: 0; padding: 0; }
button {
  border: 0;
  padding: 0;
  background: none;
  color: inherit;
  font: inherit;
  flex: none;
  display: flex;
  align-items: center;
  justify-content: center;
  white-space: nowrap;
}
svg { display: block; flex: none; }
.sprite { position: absolute; }
.half { font-family: "Liberation Mono", monospace; font-size: 8px; white-space: pre; }
.tag { font: 700 9px "Liberation Sans", sans-serif; }
.navy { fill: #24248c; }
.red { fill: #b02430; }

.titlebar {
  flex: none;
  height: 20px;
  display: flex;
  align-items: center;
  padding-left: 1px;
  background: linear-gradient(#3a8cf8, #0a5ce4 25%, #0456e8 75%, #0a62fa 88%, #0240b8);
  color: #fff;
}
.titlebar h1 { font-size: 11px; line-height: 16px; font-weight: 700; white-space: nowrap; }
.titlebar .half { font-size: 10px; }
.i16 { width: 14px; height: 14px; margin-right: 1px; }
.i14 { width: 13px; height: 13px; }

.menubar {
  flex: none;
  height: 18px;
  display: flex;
  align-items: center;
  gap: 10px;
  padding-left: 1px;
  background: #f1efe5;
  border-bottom: 1px solid #dedac8;
}
.menubar .grip { margin-right: -12px; }
.menubar .i14 { margin-right: -7px; }

.toolbar {
  flex: none;
  height: 25px;
  display: flex;
  align-items: center;
  overflow: hidden;
  border-top: 1px solid #faf9f4;
  border-bottom: 1px solid #dedac8;
  background: linear-gradient(#f4f2ea, #ebe8da);
}
.toolbar.std { height: 27px; }
.toolbar button { width: 23px; height: 23px; }
.toolbar svg { width: 18px; height: 18px; }
.toolbar .label { gap: 3px; justify-content: flex-start; }
.toolbar .start { width: 50px; }
.toolbar .start .tri { width: 5px; height: 4px; }
.toolbar .finder { width: 73px; padding-left: 4px; }
.toolbar .drop { width: 10px; }
.selectbar .drop { width: 7px; }
.toolbar .drop svg, .selectbar .drop svg { width: 5px; height: 4px; }
.toolbar .over { align-items: flex-end; padding-bottom: 3px; }
.on { background: #fbcf9f; outline: 1px solid #8c7a5c; outline-offset: -1px; }
.grip {
  flex: none;
  width: 8px;
  height: 17px;
  border-left: 3px solid transparent;
  border-right: 3px solid transparent;
  background: repeating-linear-gradient(#a9a695 0 1px, transparent 1px 3px) padding-box;
}
.toolbar > .grip:first-child { width: 6px; border-right-width: 1px; }
.toolbar > .grip.wide { width: 10px; border-right-width: 5px; }
.sep { flex: none; width: 5px; height: 20px; border-left: 2px solid transparent; border-right: 2px solid transparent; background: #cbc7b6 padding-box; }
.feature .sep { width: 7px; border-right-width: 4px; }
.utility { background: #ebe8da; }

.selectbar {
  flex: none;
  height: 22px;
  display: flex;
  align-items: center;
  padding-left: 3px;
  background: linear-gradient(#f4f3ee, #dedbce 50%, #b9b6a6);
}
.selectbar button { width: 17px; height: 17px; }
.selectbar svg { width: 14px; height: 14px; }
.selectbar .gap { width: 6px; }
.combo { display: grid; grid-template-columns: 1fr 12px; height: 14px; margin-right: 4px; border: 1px solid #7f9db9; background: #fff; align-items: center; }
.combo select { grid-area: 1 / 1 / 2 / 3; min-width: 0; width: 100%; height: 12px; border: 0; padding: 0 0 0 1px; appearance: none; background: none; color: #111; font: inherit; line-height: 12px; }
.combo svg { grid-area: 1 / 2; width: 11px; height: 12px; padding: 3px 2px; background: linear-gradient(#dde8ff, #b4caf4); pointer-events: none; }
.filter { width: 85px; }
.scope { width: 90px; margin-right: 2px; }

.status { flex: none; height: 17px; display: flex; background: #ece9d8; border-top: 1px solid #a09c8c; border-bottom: 1px solid #b9b6a8; }
.status p { flex: 1; padding-left: 2px; font-size: 10px; line-height: 15px; font-weight: 700; white-space: nowrap; }
.status p:first-child { flex: 0 0 63%; border-right: 1px solid #c5c1b0; }
.status .half { font-size: 8px; }

main { flex: 1; min-height: 0; display: flex; }
.resources { flex: none; width: 25px; overflow: hidden; display: flex; flex-direction: column; padding: 12px 0 0 4px; background: #aaa696; }
.resources button { height: 31px; background: linear-gradient(90deg, #fbfaf5, #eceadd); border-bottom: 1px solid #c9c5b4; }
.resources .current { margin-left: -1px; height: 34px; background: #f1efe4; }
.resources svg { width: 20px; height: 20px; }
.resources i { flex: none; height: 10px; }

.navigator { flex: none; width: 229px; display: flex; flex-direction: column; padding: 0 6px 0 7px; background: #efecdf; border-left: 1px solid #faf8ec; border-right: 2px solid #b4b1a6; }
.navigator h2 { flex: none; height: 26px; display: flex; align-items: center; gap: 6px; padding: 8px 0 0 3px; font-size: 10px; line-height: 16px; font-weight: 700; }
.navigator h2 svg { width: 8px; height: 8px; }
.tree { flex: 1; min-height: 0; display: flex; flex-direction: column; background: #fff; border: 1px solid #93a9bb; border-bottom: 0; }
.cols { display: flex; height: 12px; flex: none; background: #ebe9dc; border-bottom: 1px solid #c5c1b0; line-height: 11px; }
.cols span { display: flex; align-items: center; gap: 8px; padding-left: 4px; }
.cols span:first-child { flex: 0 0 150px; border-right: 1px solid #c5c1b0; }
.cols svg { width: 7px; height: 4px; }
.tree ul { list-style: none; }
.tree > ul { flex: 1; overflow: hidden; }
.tree li { display: flex; align-items: center; height: 14px; padding-left: 4px; white-space: nowrap; }
.tree .branch { display: block; height: auto; padding-left: 5px; }
.tree li svg { width: 13px; height: 13px; margin-right: 1px; }
.tree li li { padding-left: 16px; }
.tree label { display: flex; align-items: center; }
.tree label svg { margin: 0 0 0 2px; }
.dim { color: #a5a5a0; }
.twig, .twist { flex: none; width: 7px; height: 7px; margin-right: 3px; }
.twig { height: 1px; background: #d2d0c8; }
.twist { border: 1px solid #8496a5; background: linear-gradient(#222, #222) center / 3px 1px no-repeat, linear-gradient(#222, #222) center / 1px 3px no-repeat, #f6f5ef; }
.twist.open { background: linear-gradient(#222, #222) center / 3px 1px no-repeat, #f6f5ef; }
.tree input { appearance: none; width: 10px; height: 10px; margin: 0 0 0 -1px; border: 1px solid #32564a; background: #fff; }
.tree input::before { content: ""; display: block; height: 8px; }
.tree input:checked::before { background: #1fa038; clip-path: polygon(4% 45%, 28% 38%, 42% 58%, 85% 0, 100% 12%, 44% 100%); }
.scroll { flex: none; height: 13px; display: flex; background: #f4f3ee; }
.scroll button { width: 11px; height: 12px; margin: 0 1px; background: #c5d5fb; border-radius: 2px; }
.scroll svg { width: 8px; height: 6px; }
.scroll .left { transform: rotate(90deg); }
.scroll .right { transform: rotate(-90deg); }
.thumb { flex: 1; margin: 0 16px 1px 1px; border-right: 1px solid #98b0e8; background: linear-gradient(90deg, transparent 49%, #93a9e0 49% 52%, transparent 52%) center / 100% 4px no-repeat, linear-gradient(#cbdafc, #b5c9f8); }

.viewport { flex: 1; min-width: 0; background: linear-gradient(#b2b5b7, #cfd1d2 40%, #e6e8e9); }
.viewport svg { width: 100%; height: 100%; }
```
